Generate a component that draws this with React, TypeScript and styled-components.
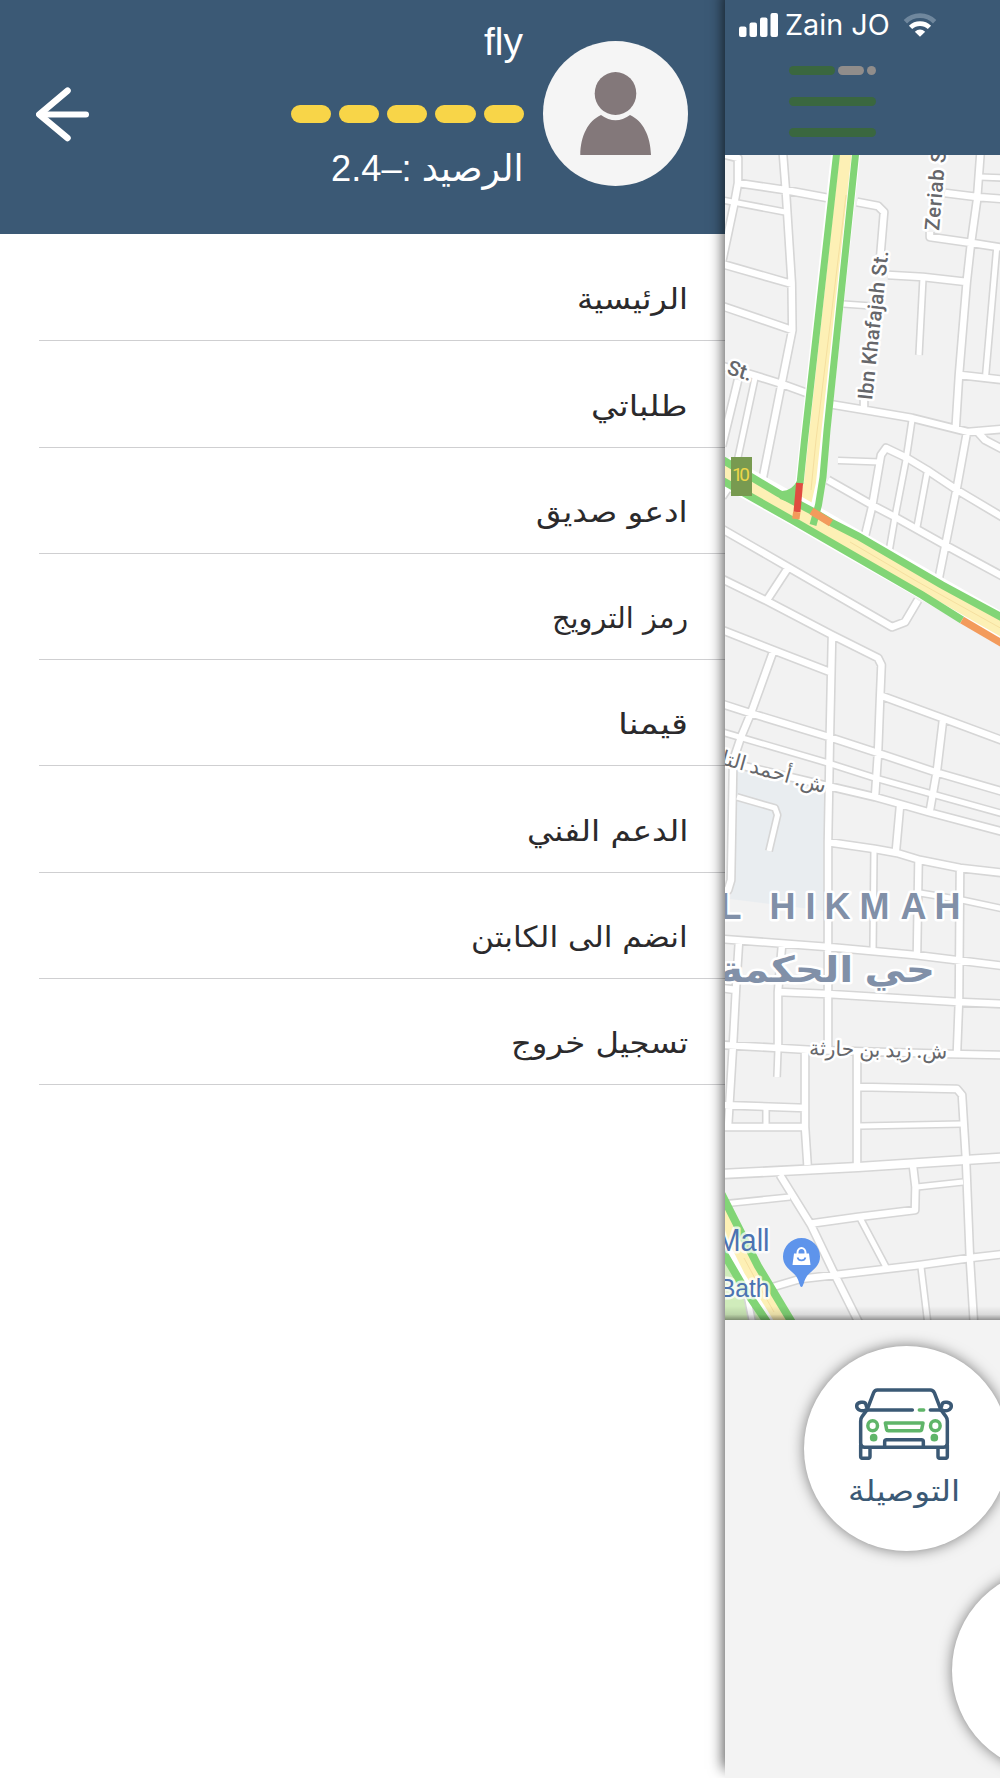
import { useLayoutEffect, useRef } from 'react';
import type { ReactNode } from 'react';
import styled, { createGlobalStyle } from 'styled-components';

const GlobalStyle = createGlobalStyle`
  * {
    box-sizing: border-box;
  }

  body {
    margin: 0;
    background: #fff;
    font-family: 'DejaVu Sans', sans-serif;
  }
`;

const NAVY = '#3b5975';
const LEAF = '#5fb569';

// ── Fitted text ─────────────────────────────────────────────────────────────
// Squeezes or stretches one line of text to a fixed width.
const FitBox = styled.span<{ $width: number }>`
  display: block;
  width: ${(p) => p.$width}px;
  direction: rtl;
  white-space: nowrap;
`;

const FitInner = styled.span`
  display: inline-block;
  transform-origin: right center;
`;

function FitText({ width, children }: { width: number; children: ReactNode }) {
  const ref = useRef<HTMLSpanElement>(null);

  useLayoutEffect(() => {
    const el = ref.current;
    if (el && el.offsetWidth) {
      el.style.transform = `scaleX(${width / el.offsetWidth})`;
    }
  }, [width, children]);

  return (
    <FitBox $width={width}>
      <FitInner ref={ref}>{children}</FitInner>
    </FitBox>
  );
}

// ── Shell ───────────────────────────────────────────────────────────────────
const Screen = styled.div`
  display: flex;
  width: 1000px;
  height: 1778px;
  overflow: hidden;
`;

const Drawer = styled.aside`
  flex: 0 0 725px;
  background: #fff;
`;

const Scene = styled.main`
  position: relative;
  display: flex;
  flex: 0 0 275px;
  flex-direction: column;
  background: #f3f3f3;
  box-shadow: -2px -9px 13px rgba(0, 0, 0, 0.65);
`;

// ── Drawer header ───────────────────────────────────────────────────────────
const DrawerHeader = styled.header`
  display: flex;
  align-items: flex-start;
  height: 234px;
  padding: 0 37px 0 36px;
  background: ${NAVY};
`;

const BackButton = styled.button`
  margin: 87px auto 0 0;
  padding: 0;
  border: 0;
  background: none;
  line-height: 0;
`;

const Profile = styled.div`
  display: flex;
  flex-direction: column;
  align-items: flex-end;
  padding-top: 20px;
  color: #fff;
  font-family: 'Liberation Sans', 'DejaVu Sans', sans-serif;
  line-height: 44px;
`;

const UserName = styled.div`
  height: 44px;
  padding-right: 1px;
  font-size: 39px;
`;

const Rating = styled.div`
  display: flex;
  gap: 8px;
  margin: 41px 0 24px;
`;

const RatingPill = styled.span`
  width: 40.3px;
  height: 18px;
  border-radius: 9px;
  background: #f8d548;
`;

const Balance = styled.div`
  height: 44px;
  font-size: 37px;
`;

const Avatar = styled.div`
  width: 145px;
  height: 145px;
  margin: 41px 0 0 19px;
  border-radius: 50%;
  background: #f5f5f5;
`;

// ── Drawer menu ─────────────────────────────────────────────────────────────
const Menu = styled.nav`
  display: flex;
  flex-direction: column;
  padding: 1px 0 0 39px;
`;

const MenuItem = styled.a`
  display: flex;
  align-items: flex-end;
  justify-content: flex-end;
  height: 106.3px;
  padding: 0 37px 21px 0;
  border-bottom: 1px solid #cfcfd1;
  color: #2b2a2c;
  font-size: 29px;
  line-height: 40px;
`;

const MENU = [
  { label: 'الرئيسية', width: 111 },
  { label: 'طلباتي', width: 97 },
  { label: 'ادعو صديق', width: 152 },
  { label: 'رمز الترويج', width: 136 },
  { label: 'قيمنا', width: 70 },
  { label: 'الدعم الفني', width: 161 },
  { label: 'انضم الى الكابتن', width: 217 },
  { label: 'تسجيل خروج', width: 177 },
];

// ── Scene top bar ───────────────────────────────────────────────────────────
const TopBar = styled.header`
  flex: 0 0 155px;
  padding: 9px 0 0 14px;
  background: ${NAVY};
`;

const StatusRow = styled.div`
  display: flex;
  align-items: center;
  height: 32px;
  color: #fff;
  font-family: Inter, 'Liberation Sans', sans-serif;
  font-size: 28.5px;
  font-weight: 400;
  line-height: 32px;
`;

const Carrier = styled.span`
  margin: 0 13px 0 6px;
`;

const Burger = styled.div`
  display: flex;
  flex-direction: column;
  gap: 22px;
  width: 87px;
  margin: 25px 0 0 50px;
`;

const BurgerLine = styled.div`
  display: flex;
  gap: 3px;
  height: 9px;
`;

const BurgerDash = styled.span<{ $width: number; $muted?: boolean }>`
  width: ${(p) => p.$width}px;
  border-radius: 5px;
  background: ${(p) => (p.$muted ? '#908d8b' : '#3a673f')};
`;

// ── Map ─────────────────────────────────────────────────────────────────────
const MapView = styled.svg`
  display: block;
  flex: 0 0 1165px;
`;

const MapLabel = styled.text`
  fill: #66676b;
  stroke: #fff;
  stroke-width: 5px;
  stroke-linejoin: round;
  paint-order: stroke;
  font-family: Roboto, 'DejaVu Sans', sans-serif;
  font-size: 20.5px;
  font-weight: 500;
`;

const DistrictLabel = styled(MapLabel)`
  fill: #8190a8;
  font-family: 'Liberation Sans', 'DejaVu Sans', sans-serif;
  font-size: 36px;
  font-weight: 700;
`;

const PlaceLabel = styled(MapLabel)<{ $size: number }>`
  fill: #4c73b2;
  stroke-opacity: 0.75;
  font-family: 'Liberation Sans', sans-serif;
  font-size: ${(p) => p.$size}px;
  font-weight: 400;
`;

const ROADS = [
  'M722 154L738 158V183L734 205L722 262',
  'M782.7 150L786 193L791.7 283L792.3 330L781.7 383L763 477',
  'M738 183L785 190L828 198M857 202L878 206L884 212L880 260',
  'M722 264L792 284',
  'M722 306L792 330',
  'M722 366L750 374L782 384L815 396M829 404L865 410L912 418L968 432L1004 429',
  'M738 380L722 446M722 497L728 488',
  'M864 400V410',
  'M888 275L923 277L967 282',
  'M980.7 150L977 200L971 243L966.7 282L959 375L955.7 428',
  'M945 193L977 197L1004 199',
  'M930 232V237L972 243L1004 248',
  'M960 375L1004 380',
  'M976 430L985 440L1004 450',
  'M967 432L957 487L945 547L938 582',
  'M1004 518L957 490L927 470L907 458L886 448L881 455L872 507L864 540',
  'M828 480L872 505L895 517L945 545L1004 577',
  'M722 529L788 567L892 627L905 622L918 600',
  'M788 568L767 600',
  'M722 579L767 601L832 635L878 658L881.5 665L880 700L878 753L875 797',
  'M722 630L773 650L830 672',
  'M773 652L751 713L741 737L734 758L733 770L731 880L728 890L722 891',
  'M832 637L830 730L829 787L828 842V1000V1050',
  'M722 704L750 713L829 737L878 753L935 772L1004 792',
  'M882 696L942 718L1004 741',
  'M943 720L937 770L930 810',
  'M735 764L828 786L875 797L900 804L928 812L1004 832',
  'M900 806L896 850',
  'M827 842L875 849L897 853L920 860L960 868L1004 873',
  'M918.5 862L917 953',
  'M960 870L959 1000L957 1052',
  'M722 939L828 947L915 955L1004 966',
  'M739 941L736 988L733 1045L728 1127',
  'M782 945L778 992V1050',
  'M722 988L736 990M778 992L828 994L958 1002L1004 1004',
  'M722 1045L778 1048L812 1050L950 1054L1004 1055',
  'M805 1052V1127L807.5 1165',
  'M857 1054V1166',
  'M860 1087L957 1089L962 1095L966 1160L970 1260L974 1325',
  'M722 1105L805 1108',
  'M722 1127L805 1127',
  'M780 1175L811 1225L835 1275L860 1325',
  'M808 1224L858 1217L915 1210L915.5 1187L913 1166',
  'M773 1287L800 1279L835 1275L920 1265L970 1258L1004 1254',
];

const LANES = [
  'M722 200L785 212',
  'M755 378L737 462',
  'M923 278L919 355',
  'M843 304L872 306',
  'M980 177L1004 178',
  'M996.7 248L985.7 375',
  'M912 420L906 460L895 517L889 552',
  'M838 460.5L880 462',
  'M927 473L917 527',
  'M722 732L828 763L875 778L932 794L1004 814',
  'M874 851L873 950',
  'M920 893L962 900L1004 909',
  'M737 797L775 808L777.5 815L769 851',
  'M778 1050L777 1077',
  'M860 1126L962 1124',
  'M766 1108V1127',
  'M722 1204L790 1197',
  'M917 1187L963 1182',
  'M860 1218L886 1267',
  'M921 1267L928 1325',
  'M747 1295L753 1325',
];

const BOULEVARDS = ['M722 1174L858 1167L965 1160L1004 1157.5'];

function Streets({ color, grow }: { color: string; grow: number }) {
  return (
    <g fill="none" stroke={color} strokeLinejoin="round">
      <path d={LANES.join('')} strokeWidth={5 + grow} />
      <path d={ROADS.join('')} strokeWidth={6.4 + grow} />
      <path d={BOULEVARDS.join('')} strokeWidth={8 + grow} />
    </g>
  );
}

function CityMap() {
  return (
    <MapView width="275" height="1165" viewBox="725 155 275 1165">
      <defs>
        <linearGradient id="mapShade" x1="0" y1="0" x2="0" y2="1">
          <stop offset="0" stopColor="#000" stopOpacity="0" />
          <stop offset="0.6" stopColor="#000" stopOpacity="0.1" />
          <stop offset="1" stopColor="#000" stopOpacity="0.4" />
        </linearGradient>
      </defs>

      <rect x="725" y="155" width="275" height="1165" fill="#f2f2f2" />
      <path d="M735 762L826 787V911L730 899Z" fill="#e9edf0" />
      <path d="M720 1245L764 1325H720Z" fill="#d0ecbb" />

      <Streets color="#d6d6d6" grow={3.2} />
      <Streets color="#fff" grow={0} />

      {/* highways */}
      <g fill="none">
        <path d="M846 150L815.5 430L810 482L801 522" stroke="#fff" strokeWidth="29" />
        <path d="M846 150L815.5 430L810 482L801 522" stroke="#fdf0b5" strokeWidth="12" />
        <path d="M722 470L798 512L848 541L915 579L1004 630" stroke="#fff" strokeWidth="30" />
        <path d="M722 470L798 512L848 541L915 579L1004 630" stroke="#fdf0b5" strokeWidth="15" />
        <path d="M846 195L816 440L811 490M850 542L918 582L1004 630" stroke="#f5dfa0" strokeWidth="1" />
        <path d="M719 1208L750 1270L784 1325" stroke="#fff" strokeWidth="24" />
        <path d="M719 1208L750 1270L784 1325" stroke="#fdf0b5" strokeWidth="13" />
        <path d="M744 1258L758 1284L774 1312" stroke="#f5dfa0" strokeWidth="1" />
      </g>
      <g fill="none" stroke="#82d576" strokeWidth="7">
        <path d="M837 150L804.5 440L800 484" />
        <path d="M856 150L827 430L823 477L818.5 505L813 525" />
        <path d="M722 459.5L778 493L812 511L832 523L858 536L942 585L1004 618.5" strokeWidth="7.6" />
        <path d="M722 480.5L792 520L922 595L962 620" strokeWidth="7.6" />
        <path d="M719 1189L758 1266L793.5 1325" strokeWidth="8" />
        <path d="M720 1247L744 1288L769 1325" strokeWidth="8" />
      </g>
      <path d="M776 490Q790 494 797 481V505L780 499Z" fill="#82d576" />
      <path d="M799.6 483L797 512" stroke="#e04c40" strokeWidth="7" />
      <g fill="none" stroke="#f39b5c" strokeWidth="7.4">
        <path d="M796.8 512L795.8 519" />
        <path d="M811.5 511L831 523" />
        <path d="M962 620L1004 644.5" />
      </g>

      {/* route shield */}
      <rect x="731" y="457" width="21" height="39" fill="#789a50" />
      <text x="732" y="480.5" fill="#ecd649" fontFamily="Roboto, sans-serif" fontSize="19" textLength="18">
        10
      </text>

      <MapLabel transform="translate(939 231) rotate(-85)" textLength="94">
        Zeriab St.
      </MapLabel>
      <MapLabel transform="translate(872 400.500) rotate(-83.7)" textLength="150">
        Ibn Khafajah St.
      </MapLabel>
      <MapLabel transform="translate(726 373.500) rotate(18)">St.</MapLabel>
      <MapLabel transform="translate(720 764) rotate(15.7)" textLength="108" lengthAdjust="spacingAndGlyphs">
        ش. أحمد التا
      </MapLabel>
      <DistrictLabel x="719.5 742 769.5 805.5 824.5 859.5 900.5 934.5" y="919.3">
        L HIKMAH
      </DistrictLabel>
      <DistrictLabel x="719" y="982" textLength="216" lengthAdjust="spacingAndGlyphs">
        حي الحكمة
      </DistrictLabel>
      <MapLabel transform="translate(809 1055) rotate(1.5)" textLength="138" lengthAdjust="spacingAndGlyphs">
        ش. زيد بن حارثة
      </MapLabel>

      <PlaceLabel x="769.5" y="1250.5" textAnchor="end" $size={31} textLength="53" lengthAdjust="spacingAndGlyphs">
        Mall
      </PlaceLabel>
      <PlaceLabel x="769.5" y="1296.5" textAnchor="end" $size={26} textLength="50.5" lengthAdjust="spacingAndGlyphs">
        Bath
      </PlaceLabel>

      {/* shopping pin */}
      <path
        d="M801.5 1287C799.5 1287 799.5 1281 796 1276C792 1271 783 1267 783 1256.5A18.5 18.5 0 0 1 820 1256.5C820 1267 811 1271 807 1276C803.5 1281 803.5 1287 801.5 1287Z"
        fill="#5e94eb"
      />
      <path d="M794 1253.500H809L810.500 1265H792.500Z" fill="#fff" />
      <path d="M797.500 1254V1252.500A4 4.500 0 0 1 805.500 1252.500V1254" fill="none" stroke="#fff" strokeWidth="2" />
      <path d="M797.500 1257.500A4.200 4.200 0 0 0 805.500 1257.500" fill="none" stroke="#5e94eb" strokeWidth="1.7" />

      <rect x="725" y="1306" width="275" height="14" fill="url(#mapShade)" />
    </MapView>
  );
}

// ── Services ────────────────────────────────────────────────────────────────
const Services = styled.section`
  display: flex;
  flex: 1;
  flex-direction: column;
  gap: 17px;
  padding: 26px 0 0 79px;
  overflow: hidden;
`;

const ServiceButton = styled.div<{ $shift?: number }>`
  display: flex;
  flex: 0 0 205px;
  flex-direction: column;
  align-items: center;
  width: 205px;
  margin-left: ${(p) => p.$shift ?? 0}px;
  padding-top: 42px;
  border-radius: 50%;
  background: #fff;
  box-shadow: 0 0 14px rgba(0, 0, 0, 0.5);
  color: ${NAVY};
  font-size: 29px;
  line-height: 40px;
`;

const CarDrawing = styled.svg`
  margin-right: 5px;
`;

const ServiceLabel = styled.div`
  margin: 11px 4px 0 0;
`;

function CarIcon() {
  return (
    <CarDrawing width="98" height="72" viewBox="46 56 294 216" fill="none" strokeLinecap="round" strokeLinejoin="round">
      <g stroke={NAVY} strokeWidth="10.5">
        <path d="M82 122L102 70Q105 62 113 62H272Q280 62 284 70L304 122" />
        <path d="M84 122H218M272 122H304" />
        <path d="M82 122L67 142Q63 147 63 156V222Q63 234 75 234H311Q323 234 323 222V156Q323 147 319 142L304 122" />
        <path d="M63 226V261Q63 267 69 267H85Q91 267 91 261V236M295 236V261Q295 267 301 267H317Q323 267 323 261V226" />
        <path d="M135 232V217Q135 211 141 211H245Q251 211 251 217V232" />
        <path d="M78 122C67 128 51 122 51 110C51 98 77 94 79 106Q80 112 83 117M308 122C319 128 335 122 335 110C335 98 309 94 307 106Q306 112 303 117" />
      </g>
      <g stroke={LEAF} strokeWidth="10.5">
        <path d="M239 122H252" />
        <ellipse cx="99" cy="169" rx="14.5" ry="15" />
        <ellipse cx="287" cy="169" rx="14.5" ry="15" />
        <path d="M137 161H250L246 181Q245 184 241 184H146Q142 184 141 181Z" />
      </g>
      <circle cx="102" cy="205" r="11.5" fill={LEAF} />
      <circle cx="284" cy="205" r="11.5" fill={LEAF} />
    </CarDrawing>
  );
}

export default function App() {
  return (
    <>
      <GlobalStyle />
      <Screen>
        <Drawer>
          <DrawerHeader>
            <BackButton aria-label="رجوع">
              <svg width="54" height="55" viewBox="0 0 54 55" fill="none" stroke="#fff" strokeLinecap="round" strokeLinejoin="round">
                <path d="M31.5 3.7L3.3 27.5L31.5 51" strokeWidth="6.5" />
                <path d="M5 27.5H50" strokeWidth="6" />
              </svg>
            </BackButton>
            <Profile>
              <UserName>fly</UserName>
              <Rating>
                {[1, 2, 3, 4, 5].map((n) => (
                  <RatingPill key={n} />
                ))}
              </Rating>
              <Balance>
                <FitText width={193}>الرصيد :–2.4</FitText>
              </Balance>
            </Profile>
            <Avatar>
              <svg width="145" height="145" viewBox="0 0 145 145" fill="#83787a">
                <ellipse cx="72.5" cy="52.5" rx="20.8" ry="21.5" />
                <path d="M37.3 114C37.5 95 45 80 58 74Q72.5 84.5 87 74C100 80 107.5 95 108 114Z" />
              </svg>
            </Avatar>
          </DrawerHeader>
          <Menu>
            {MENU.map((item) => (
              <MenuItem key={item.label}>
                <FitText width={item.width}>{item.label}</FitText>
              </MenuItem>
            ))}
          </Menu>
        </Drawer>

        <Scene>
          <TopBar>
            <StatusRow>
              <svg width="40" height="24" viewBox="0 0 40 24" fill="#fff">
                <rect x="0" y="13.5" width="7.5" height="10.5" rx="2" />
                <rect x="10.5" y="9.5" width="7.5" height="14.5" rx="2" />
                <rect x="21" y="4.5" width="7.5" height="19.5" rx="2" />
                <rect x="31.5" y="0" width="7.5" height="24" rx="2" />
              </svg>
              <Carrier>
                <FitText width={105}>Zain JO</FitText>
              </Carrier>
              <svg width="34" height="25" viewBox="0 0 36 25" fill="none">
                <path d="M2.5 8.5A22 22 0 0 1 33.5 8.5" stroke="#6f879d" strokeWidth="5" />
                <path d="M8 14.5A14.5 14.5 0 0 1 28 14.5" stroke="#fff" strokeWidth="5" />
                <path d="M12.5 19Q18 14.5 23.5 19L18 24.5Z" fill="#fff" />
              </svg>
            </StatusRow>
            <Burger>
              <BurgerLine>
                <BurgerDash $width={46} />
                <BurgerDash $width={26} $muted />
                <BurgerDash $width={9} $muted />
              </BurgerLine>
              <BurgerLine>
                <BurgerDash $width={87} />
              </BurgerLine>
              <BurgerLine>
                <BurgerDash $width={87} />
              </BurgerLine>
            </Burger>
          </TopBar>
          <CityMap />
          <Services>
            <ServiceButton>
              <CarIcon />
              <ServiceLabel>
                <FitText width={112}>التوصيلة</FitText>
              </ServiceLabel>
            </ServiceButton>
            <ServiceButton $shift={148} />
          </Services>
        </Scene>
      </Screen>
    </>
  );
}
